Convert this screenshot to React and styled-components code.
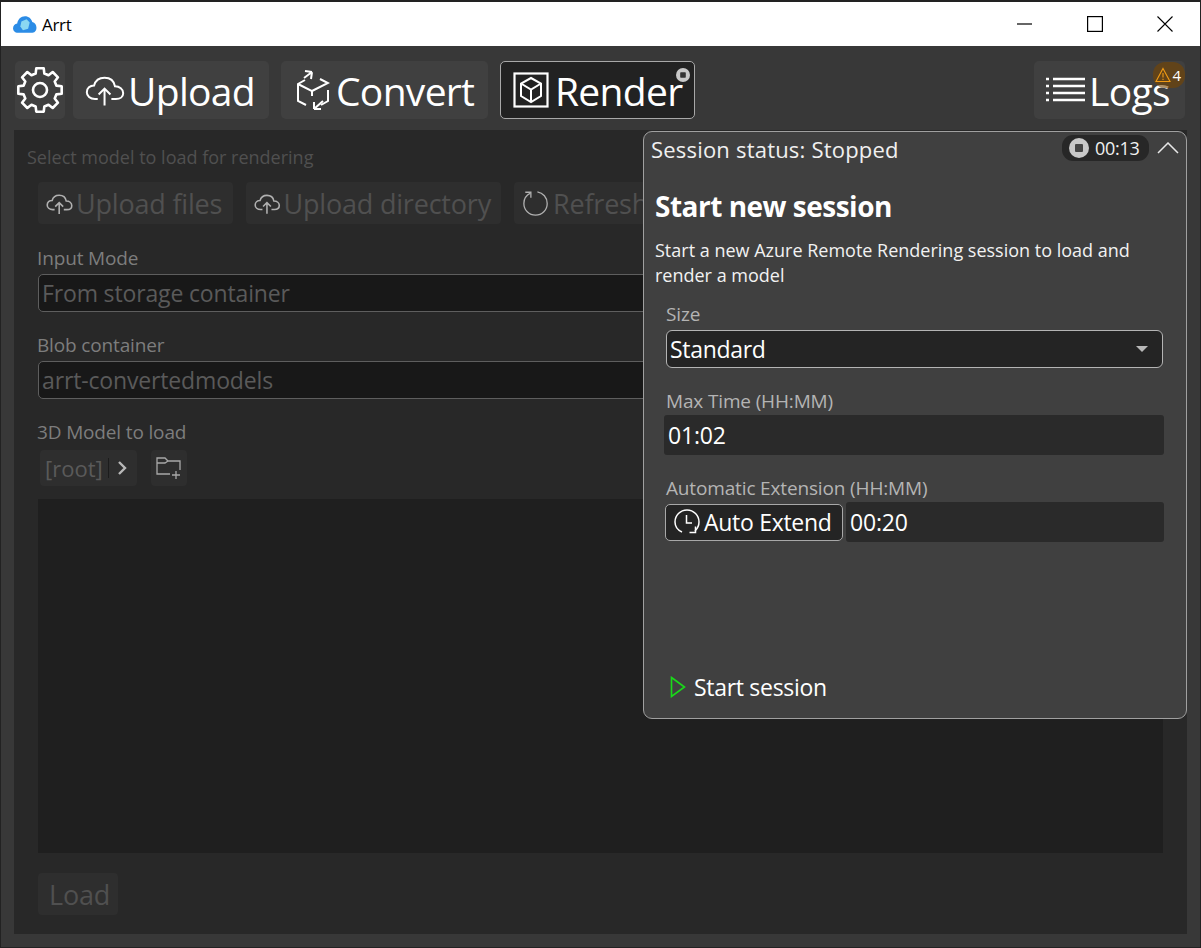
import React from 'react';
import styled, { createGlobalStyle } from 'styled-components';

const GlobalStyle = createGlobalStyle`
  html, body {
    margin: 0;
    padding: 0;
    background: #383838;
  }
  * {
    box-sizing: border-box;
  }
`;

const Window = styled.div`
  width: 1201px;
  height: 948px;
  overflow: hidden;
  display: flex;
  flex-direction: column;
  background: #383838;
  border: 1px solid #222;
  border-top-width: 2px;
  font-family: "Open Sans", "Noto Sans", sans-serif;
  color: #fff;
`;

const TitleBar = styled.header`
  height: 44px;
  flex: none;
  display: flex;
  align-items: center;
  background: #fff;
  color: #000;
  padding-left: 11px;
  font-size: 17px;
  letter-spacing: -0.3px;
`;

const AppName = styled.span`
  margin-left: 5px;
`;

const WindowControls = styled.div`
  margin-left: auto;
  display: flex;
  height: 100%;
`;

const WindowControl = styled.div`
  width: 70px;
  display: flex;
  align-items: center;
  justify-content: center;
`;

const Toolbar = styled.nav`
  height: 84px;
  flex: none;
  display: flex;
  align-items: flex-start;
  gap: 12px;
  padding: 15px 15px 0 14px;
`;

const ToolButton = styled.div`
  position: relative;
  height: 58px;
  display: flex;
  align-items: center;
  gap: ${(p) => p.$gap || 0}px;
  padding: 0 ${(p) => p.$right || 10}px 0 ${(p) => p.$left || 12}px;
  margin-right: ${(p) => p.$after || 0}px;
  margin-left: ${(p) => (p.$end ? 'auto' : '0')};
  width: ${(p) => p.$width}px;
  border-radius: 5px;
  background: ${(p) => (p.$active ? '#222' : '#404040')};
  border: ${(p) => (p.$active ? '1px solid #a8a8a8' : 'none')};
  font-size: 39px;
  letter-spacing: -0.7px;
  white-space: nowrap;
`;

const RenderBadge = styled.span`
  position: absolute;
  top: 6px;
  right: 4px;
  display: flex;
`;

const LogsBadge = styled.span`
  position: absolute;
  top: 1px;
  right: 0;
  width: 32px;
  height: 26px;
  display: flex;
  align-items: center;
  justify-content: space-between;
  padding: 0 4px 0 2px;
  border-radius: 12px;
  background: rgba(120, 70, 0, 0.6);
  font-size: 15px;
  letter-spacing: 0;
`;

const Main = styled.main`
  position: relative;
  flex: 1;
  margin: 0 13px 13px 13px;
  background: #282828;
  display: flex;
  flex-direction: column;
  padding: 0 24px;
  overflow: hidden;
`;

const Heading = styled.div`
  margin: 15px 0 0 -11px;
  height: 24px;
  line-height: 24px;
  font-size: 18px;
  color: #505050;
`;

const ActionRow = styled.div`
  margin-top: 13px;
  display: flex;
  gap: 13px;
  white-space: nowrap;
`;

const GhostButton = styled.div`
  height: ${(p) => p.$height || 42}px;
  display: flex;
  align-items: center;
  gap: 3px;
  padding: 0 10px 0 ${(p) => p.$left || 8}px;
  width: ${(p) => p.$width}px;
  flex: none;
  border-radius: 4px;
  background: #2e2e2e;
  font-size: 27px;
  letter-spacing: -0.2px;
  color: #505050;
`;

const FieldLabel = styled.label`
  display: block;
  height: 24px;
  line-height: 24px;
  margin-top: ${(p) => p.$top || 0}px;
  margin-left: ${(p) => (p.$bright ? 0 : -1)}px;
  font-size: 19px;
  letter-spacing: -0.15px;
  color: ${(p) => (p.$bright ? '#b4b4b4' : '#7d7d7d')};
`;

const DisabledSelect = styled.div`
  height: 38px;
  margin-top: 4px;
  display: flex;
  align-items: center;
  padding-left: 3px;
  border: 1px solid #5e5e5e;
  border-radius: 5px;
  background: #181818;
  font-size: 23px;
  letter-spacing: -0.15px;
  color: #5a5a5a;
`;

const PathRow = styled.div`
  display: flex;
  gap: 14px;
  margin-top: 6px;
`;

const Breadcrumb = styled.div`
  width: 97px;
  height: 36px;
  margin-left: 2px;
  display: flex;
  align-items: center;
  padding-left: 5px;
  border-radius: 4px;
  background: #2e2e2e;
  font-size: 22px;
  color: #5a5a5a;
`;

const CrumbDivider = styled.span`
  width: 1px;
  height: 20px;
  margin: 0 7px 0 5px;
  background: #1c1c1c;
`;

const IconSquare = styled.div`
  width: 36px;
  height: 36px;
  display: flex;
  align-items: center;
  justify-content: center;
  border-radius: 4px;
  background: #2e2e2e;
`;

const ModelList = styled.div`
  height: 354px;
  margin-top: 13px;
  background: #1f1f1f;
`;

const LoadRow = styled.div`
  margin-top: 20px;
`;

const SessionPanel = styled.section`
  position: absolute;
  top: 1px;
  left: 629px;
  width: 544px;
  height: 588px;
  display: flex;
  flex-direction: column;
  padding: 0 23px 0 11px;
  background: #404040;
  border: 1px solid #a0a0a0;
  border-radius: 9px;
`;

const SessionHeader = styled.div`
  height: 34px;
  margin: 0 -23px 0 -4px;
  display: flex;
  align-items: center;
  font-size: 22px;
  letter-spacing: 0.2px;
  color: #f0f0f0;
`;

const TimerPill = styled.div`
  margin-left: auto;
  width: 87px;
  height: 26px;
  margin-top: -3px;
  display: flex;
  align-items: center;
  gap: 6px;
  padding-left: 7px;
  border-radius: 11px;
  background: #272727;
  font-size: 18px;
  letter-spacing: -0.3px;
`;

const Collapse = styled.div`
  width: 37px;
  display: flex;
  justify-content: center;
  margin-top: -3px;
`;

const SessionTitle = styled.h2`
  margin: 20px 0 0 0;
  height: 40px;
  line-height: 40px;
  font-size: 28px;
  font-weight: 700;
  letter-spacing: -0.5px;
  color: #fff;
`;

const SessionText = styled.p`
  margin: 12px 0 0 0;
  font-size: 18px;
  line-height: 25px;
  color: #f2f2f2;
`;

const SessionForm = styled.div`
  margin: 14px 0 0 11px;
  display: flex;
  flex-direction: column;
`;

const SizeSelect = styled.div`
  height: 38px;
  margin-top: 4px;
  display: flex;
  align-items: center;
  justify-content: space-between;
  padding: 0 14px 0 3px;
  border: 1px solid #b4b4b4;
  border-radius: 6px;
  background: #242424;
  font-size: 23px;
  letter-spacing: -0.3px;
`;

const Caret = styled.span`
  width: 0;
  height: 0;
  border-left: 6px solid transparent;
  border-right: 6px solid transparent;
  border-top: 6px solid #b8b8b8;
`;

const TextBox = styled.div`
  height: 40px;
  flex: ${(p) => (p.$fill ? 1 : 'none')};
  margin: ${(p) => p.$top || 0}px -1px 0 ${(p) => (p.$fill ? 3 : -2)}px;
  display: flex;
  align-items: center;
  padding-left: 4px;
  border-radius: 3px;
  background: #2a2a2a;
  font-size: 23px;
  letter-spacing: -0.2px;
`;

const AutoRow = styled.div`
  display: flex;
  align-items: center;
  margin-top: 2px;
`;

const AutoButton = styled.div`
  width: 178px;
  height: 37px;
  flex: none;
  margin-left: -1px;
  display: flex;
  align-items: center;
  gap: 4px;
  padding-left: 8px;
  border: 1px solid #a8a8a8;
  border-radius: 5px;
  background: #242424;
  font-size: 23px;
  letter-spacing: -0.3px;
  white-space: nowrap;
`;

const StartButton = styled.div`
  margin-top: auto;
  margin-bottom: 15px;
  margin-left: 15px;
  display: flex;
  align-items: center;
  gap: 8px;
  font-size: 23px;
  letter-spacing: -0.3px;
`;

// gear outline built from 8 square teeth
const gearPath = (cx, cy, outer, inner) => {
  const pts = [];
  for (let i = 0; i < 8; i++) {
    const a = (i * Math.PI) / 4 - Math.PI / 2;
    const w = 0.17;
    const g = 0.26;
    pts.push([a - g, inner], [a - w, outer], [a + w, outer], [a + g, inner]);
  }
  return (
    'M' +
    pts
      .map(([a, r]) => `${(cx + r * Math.cos(a)).toFixed(2)} ${(cy + r * Math.sin(a)).toFixed(2)}`)
      .join('L') +
    'Z'
  );
};

const CloudIcon = ({ size = 40, color = '#fff', width = 2.2 }) => (
  <svg width={size} height={size} viewBox="0 0 44 44" fill="none" stroke={color} strokeWidth={width}>
    <path d="M14 32H11C5.5 32 2 28.5 2 24.5C2 20 5.5 17 10 17C11.5 11.5 16 8.5 21.5 8.5C28 8.5 32 12.5 33 18C38 18 42 21 42 25.5C42 29.5 38.5 32 34 32H29" />
    <path d="M21.5 39V21M15 27L21.5 20.5L28 27" />
  </svg>
);

const GearIcon = () => (
  <svg width="48" height="48" viewBox="0 0 48 48" fill="none" stroke="#fff" strokeWidth="2.6" strokeLinejoin="round">
    <path d={gearPath(24, 24, 22, 17)} />
    <circle cx="24" cy="24" r="7" />
  </svg>
);

const ConvertIcon = () => (
  <svg width="34" height="44" viewBox="0 0 34 44" fill="none" stroke="#fff" strokeWidth="2">
    <path d="M9 12L2 16V33L10 37M2 16L16 23V28M16 23L32 15L24 11M32 22V33L25 37" />
    <path d="M8 10L16 4M16 4L15 11M16 4L9 3" />
    <path d="M27 33L18 41M18 41H25M18 41V34" />
  </svg>
);

const RenderIcon = () => (
  <svg width="36" height="36" viewBox="0 0 36 36" fill="none" stroke="#fff" strokeWidth="2">
    <rect x="1.5" y="1.5" width="33" height="33" strokeWidth="2.2" />
    <path d="M18 6L28 11.5V24L18 30L8 24V11.5Z" />
    <path d="M8 11.5L18 17.5L28 11.5M18 17.5V30" />
  </svg>
);

const LogsIcon = () => (
  <svg width="39" height="28" viewBox="0 0 39 28" fill="none" stroke="#fff" strokeWidth="2.4">
    <path d="M7 3H39M7 10H39M7 17H39M7 24H39" />
    <path d="M0 3H3M0 10H3M0 17H3M0 24H3" />
  </svg>
);

const StopDot = ({ size, ring = '#c8c8c8', hole = '#333' }) => (
  <svg width={size} height={size} viewBox="0 0 20 20">
    <circle cx="10" cy="10" r="10" fill={ring} />
    <rect x="6" y="6" width="8" height="8" rx="1" fill={hole} />
  </svg>
);

const RefreshIcon = () => (
  <svg width="28" height="30" viewBox="0 0 30 30" fill="none" stroke="#b0b0b0" strokeWidth="1.4">
    <path d="M9 4.5C4 7 2 11 2 15.5C2 22.5 7.5 28 14.5 28C21.5 28 27 22.5 27 15.5C27 9 22.5 4 16.5 3" />
    <path d="M3.5 3.5H9.5V9.5" />
  </svg>
);

const ChevronRight = () => (
  <svg width="12" height="16" viewBox="0 0 12 16" fill="none" stroke="#b8b8b8" strokeWidth="2.4">
    <path d="M3 2L9 8L3 14" />
  </svg>
);

const FolderPlus = () => (
  <svg width="27" height="24" viewBox="0 0 27 24" fill="none" stroke="#a8a8a8" strokeWidth="1.3">
    <path d="M14 18H1V2H9L12 5H24V14" />
    <path d="M1 7H9L12 5" />
    <path d="M20 15V23M16 19H24" />
  </svg>
);

const ClockIcon = () => (
  <svg width="26" height="26" viewBox="0 0 26 26" fill="none" stroke="#fff" strokeWidth="1.5">
    <path d="M8 23C3.5 21 1 17.5 1 13C1 6.5 6.2 1 13 1C19.8 1 25 6.5 25 13C25 16.5 23.5 19.5 21 22" />
    <path d="M12.5 6V14H18" />
    <path d="M21.5 17.5V23.5H15.5" />
  </svg>
);

const TitleLogo = () => (
  <svg width="25" height="21" viewBox="0 0 24 20">
    <path d="M6 18C2.5 18 1 15.5 1 13.5C1 11 2.8 9.4 5 9C5.5 5 8.5 2 12.5 2C16 2 18.5 4.3 19.5 7.5C22 8 23.5 10.5 23.5 13C23.5 16 21.5 18 18.5 18Z" fill="#2b8ce6" />
    <path d="M9 7L14 5L17 8L15.5 14L10.5 15.5L8 12Z" fill="#8ad8f2" />
  </svg>
);

const Minimize = () => (
  <svg width="16" height="16" viewBox="0 0 16 16" stroke="#000" strokeWidth="1.2">
    <path d="M0 8H15" />
  </svg>
);

const Maximize = () => (
  <svg width="16" height="16" viewBox="0 0 16 16" fill="none" stroke="#000" strokeWidth="1.2">
    <rect x="0.6" y="0.6" width="14.8" height="14.8" />
  </svg>
);

const CloseIcon = () => (
  <svg width="16" height="16" viewBox="0 0 16 16" stroke="#000" strokeWidth="1.1">
    <path d="M0.5 0.5L15.5 15.5M15.5 0.5L0.5 15.5" />
  </svg>
);

const WarnIcon = () => (
  <svg width="16" height="16" viewBox="0 0 16 16" fill="none" stroke="#f09a13" strokeWidth="1.1">
    <path d="M8 1.5L15 14.5H1Z" />
    <path d="M8 6V10.5M8 11.8V13" />
  </svg>
);

const ChevronUp = () => (
  <svg width="22" height="12" viewBox="0 0 22 12" fill="none" stroke="#e8e8e8" strokeWidth="1.5">
    <path d="M1 11L11 1L21 11" />
  </svg>
);

const PlayIcon = () => (
  <svg width="16" height="22" viewBox="0 0 16 22" fill="none" stroke="#19d919" strokeWidth="1.6">
    <path d="M1.5 1.5L14.5 11L1.5 20.5Z" />
  </svg>
);

const App = () => {
  return (
    <>
      <GlobalStyle />
      <Window>
        <TitleBar>
          <TitleLogo />
          <AppName>Arrt</AppName>
          <WindowControls>
            <WindowControl><Minimize /></WindowControl>
            <WindowControl><Maximize /></WindowControl>
            <WindowControl><CloseIcon /></WindowControl>
          </WindowControls>
        </TitleBar>

        <Toolbar>
          <ToolButton $width={50} $left={1} $right={1} $after={-4}><GearIcon /></ToolButton>
          <ToolButton $width={196} $left={12} $gap={3}><CloudIcon />Upload</ToolButton>
          <ToolButton $width={207} $left={15} $gap={6}><ConvertIcon />Convert</ToolButton>
          <ToolButton $width={195} $left={12} $gap={6} $active>
            <RenderIcon />Render
            <RenderBadge><StopDot size={14} hole="#333" /></RenderBadge>
          </ToolButton>
          <ToolButton $width={151} $left={12} $gap={4} $end>
            <LogsIcon />Logs
            <LogsBadge><WarnIcon />4</LogsBadge>
          </ToolButton>
        </Toolbar>

        <Main>
          <Heading>Select model to load for rendering</Heading>
          <ActionRow>
            <GhostButton $width={195}><CloudIcon size={27} color="#b0b0b0" width={2.6} />Upload files</GhostButton>
            <GhostButton $width={255}><CloudIcon size={27} color="#b0b0b0" width={2.6} />Upload directory</GhostButton>
            <GhostButton $width={160}><RefreshIcon />Refresh</GhostButton>
          </ActionRow>

          <FieldLabel $top={22}>Input Mode</FieldLabel>
          <DisabledSelect>From storage container</DisabledSelect>
          <FieldLabel $top={21}>Blob container</FieldLabel>
          <DisabledSelect>arrt-convertedmodels</DisabledSelect>
          <FieldLabel $top={21}>3D Model to load</FieldLabel>
          <PathRow>
            <Breadcrumb>[root]<CrumbDivider /><ChevronRight /></Breadcrumb>
            <IconSquare><FolderPlus /></IconSquare>
          </PathRow>
          <ModelList />
          <LoadRow>
            <GhostButton $width={80} $left={11}>Load</GhostButton>
          </LoadRow>

          <SessionPanel>
            <SessionHeader>
              Session status: Stopped
              <TimerPill><StopDot size={20} hole="#444" />00:13</TimerPill>
              <Collapse><ChevronUp /></Collapse>
            </SessionHeader>
            <SessionTitle>Start new session</SessionTitle>
            <SessionText>Start a new Azure Remote Rendering session to load and render a model</SessionText>
            <SessionForm>
              <FieldLabel $bright>Size</FieldLabel>
              <SizeSelect>Standard<Caret /></SizeSelect>
              <FieldLabel $bright $top={21}>Max Time (HH:MM)</FieldLabel>
              <TextBox $top={2}>01:02</TextBox>
              <FieldLabel $bright $top={21}>Automatic Extension (HH:MM)</FieldLabel>
              <AutoRow>
                <AutoButton><ClockIcon />Auto Extend</AutoButton>
                <TextBox $fill>00:20</TextBox>
              </AutoRow>
            </SessionForm>
            <StartButton><PlayIcon />Start session</StartButton>
          </SessionPanel>
        </Main>
      </Window>
    </>
  );
};

export default App;
